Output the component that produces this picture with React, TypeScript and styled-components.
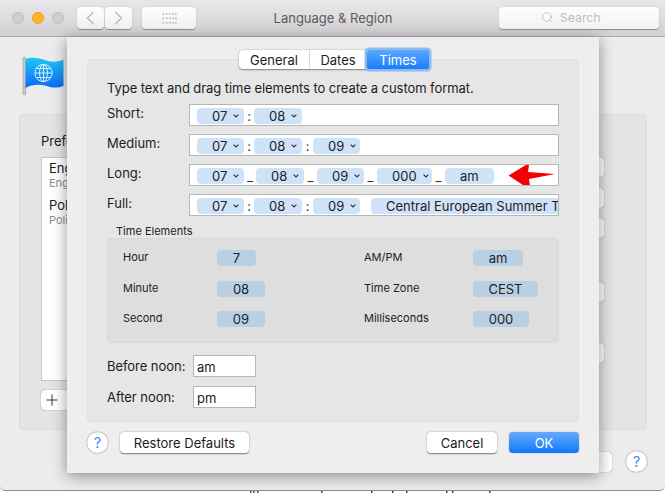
import React from "react";
import styled, { createGlobalStyle } from "styled-components";
import { Search } from "lucide-react";

const GlobalStyle = createGlobalStyle`
  html, body {
    margin: 0;
    padding: 0;
    background: #ffffff;
    overflow: hidden;
  }
  body {
    font-family: Inter, "Liberation Sans", sans-serif;
    font-size: 13px;
    color: #1c1c1c;
  }
`;

const Page = styled.div`
  width: 665px;
  height: 493px;
  overflow: hidden;
`;

const Window = styled.div`
  position: relative;
  width: 665px;
  height: 491px;
  background: #ececec;
  border-bottom: 1px solid #8d8d8d;
  border-radius: 0 0 5px 5px;
  box-sizing: border-box;
  overflow: hidden;
`;

const TitleBar = styled.div`
  height: 37px;
  box-sizing: border-box;
  display: flex;
  align-items: center;
  padding: 0 6px 1px 12px;
  background: linear-gradient(#e9e7e9, #d2d0d2);
  border-bottom: 1px solid #aeaeae;
`;

const Light = styled.span<{ $color: string; $edge: string }>`
  width: 12px;
  height: 12px;
  border-radius: 50%;
  margin-right: 8px;
  background: ${(p) => p.$color};
  border: 1px solid ${(p) => p.$edge};
  box-sizing: border-box;
`;

const ToolButton = styled.div<{ $w: number; $ml?: number }>`
  width: ${(p) => p.$w}px;
  height: 22px;
  margin-left: ${(p) => p.$ml ?? 0}px;
  display: flex;
  align-items: center;
  justify-content: center;
  box-sizing: border-box;
  border-radius: 4px;
  background: linear-gradient(#fdfdfd, #f1f1f1);
  box-shadow: 0 0.5px 1px rgba(0, 0, 0, 0.35);
`;

const WindowTitle = styled.div`
  width: 274px;
  margin-right: 29px;
  text-align: center;
  color: #5a5a5a;
  font-size: 13px;
`;

const SearchBox = styled.div`
  width: 160px;
  height: 22px;
  box-sizing: border-box;
  padding-left: 42px;
  display: flex;
  align-items: center;
  gap: 6px;
  color: #bdbdbd;
  font-size: 12.2px;
  border-radius: 4px;
  background: linear-gradient(#fdfdfd, #f3f3f3);
  box-shadow: 0 0.5px 1px rgba(0, 0, 0, 0.35);
`;

const Pane = styled.div`
  padding: 19px 18px 0 19px;
`;

const FlagMark = styled.svg`
  display: block;
  width: 44px;
  height: 40px;
  margin: 0 0 18px 3px;
`;

const PrefsGroup = styled.div`
  width: 628px;
  height: 316px;
  box-sizing: border-box;
  padding: 18px 0 0 21px;
  background: #e4e4e4;
  border: 1px solid #dddddd;
  border-radius: 4px;
  position: relative;
`;

const PrefsLabel = styled.div`
  height: 16px;
  margin-bottom: 8px;
`;

const PrefsBody = styled.div`
  display: flex;
  justify-content: space-between;
  padding-right: 42px;
`;

const LangList = styled.div`
  width: 300px;
  height: 224px;
  box-sizing: border-box;
  padding: 0 7px;
  background: #ffffff;
  border: 1px solid #c6c6c6;
`;

const LangName = styled.div`
  line-height: 16px;
  margin-top: 2px;
`;

const LangSub = styled.div`
  font-size: 11px;
  line-height: 14px;
  color: #8f8f8f;
  margin-bottom: 7px;
`;

const SideColumn = styled.div`
  display: flex;
  flex-direction: column;
`;

const SideButton = styled.div<{ $top: number }>`
  width: 84px;
  height: 20px;
  margin-top: ${(p) => p.$top}px;
  background: #ffffff;
  border-radius: 4px;
  box-shadow: 0 0 1px rgba(0, 0, 0, 0.6);
`;

const AddButton = styled.div`
  width: 60px;
  height: 20px;
  margin-top: 9px;
  display: flex;
  align-items: center;
  padding-left: 5px;
  box-sizing: border-box;
  background: #ffffff;
  border-radius: 4px;
  box-shadow: 0 0 1px rgba(0, 0, 0, 0.7);
`;

const PaneFooter = styled.div`
  display: flex;
  justify-content: flex-end;
  align-items: center;
  gap: 14px;
  margin-top: 21px;
`;

const FooterButton = styled.div`
  width: 70px;
  height: 20px;
  background: #ffffff;
  border-radius: 4px;
  box-shadow: 0 0 1px rgba(0, 0, 0, 0.6);
`;

const HelpButton = styled.div`
  width: 21px;
  height: 21px;
  border-radius: 50%;
  display: flex;
  align-items: center;
  justify-content: center;
  color: #2b84f6;
  font-size: 14px;
  background: #ffffff;
  box-shadow: 0 0 1.5px rgba(0, 0, 0, 0.6);
`;

const Sheet = styled.div`
  position: absolute;
  left: 67px;
  top: 37px;
  width: 532px;
  height: 436px;
  box-sizing: border-box;
  padding: 13px 20px 0;
  background: #eeeeee;
  box-shadow: 0 3px 14px rgba(0, 0, 0, 0.42);
`;

const Tabs = styled.div`
  position: relative;
  z-index: 1;
  display: flex;
  width: fit-content;
  height: 19px;
  margin: 0 0 -10px 152px;
  border-radius: 4px;
  background: #ffffff;
  box-shadow: 0 0.5px 1.5px rgba(0, 0, 0, 0.45);
`;

const Tab = styled.div<{ $w: number; $active?: boolean }>`
  width: ${(p) => p.$w}px;
  display: flex;
  align-items: center;
  justify-content: center;
  font-size: 13px;
  box-sizing: border-box;
  color: ${(p) => (p.$active ? "#ffffff" : "#1c1c1c")};
  border-right: ${(p) => (p.$active ? "none" : "1px solid #d8d8d8")};
  border-radius: ${(p) => (p.$active ? "2px" : "0")};
  background: ${(p) => (p.$active ? "linear-gradient(#5aa8fd, #1a7dfb)" : "transparent")};
  box-shadow: ${(p) => (p.$active ? "0 0 0 2.5px #8fbcf0" : "none")};
`;

const InnerGroup = styled.div`
  height: 363px;
  box-sizing: border-box;
  padding: 20px 19px 0;
  background: #e6e6e6;
  border: 1px solid #e0e0e0;
  border-radius: 4px;
`;

const Hint = styled.div`
  line-height: 16px;
  margin-bottom: 8px;
  letter-spacing: -0.07px;
`;

const FormatRows = styled.div`
  display: flex;
  flex-direction: column;
  gap: 8px;
`;

const FormatRow = styled.div`
  display: flex;
  height: 22px;
`;

const RowLabel = styled.div`
  width: 82px;
  line-height: 18px;
`;

const FormatField = styled.div`
  position: relative;
  flex: 1;
  display: flex;
  align-items: center;
  box-sizing: border-box;
  padding: 2px 0 0 7px;
  overflow: hidden;
  white-space: nowrap;
  background: #ffffff;
  border: 1px solid #b6b6b6;
`;

const Token = styled.div<{ $w: number; $pad?: number }>`
  flex: none;
  width: ${(p) => p.$w}px;
  height: 16px;
  display: flex;
  align-items: center;
  box-sizing: border-box;
  padding-left: ${(p) => p.$pad ?? 15}px;
  border-radius: 4px;
  background: #cfe3f8;
  color: #222222;
  font-size: 13px;
`;

const Caret = styled.svg`
  width: 6px;
  height: 4px;
  margin-left: 6px;
`;

const Sep = styled.div<{ $w: number }>`
  flex: none;
  width: ${(p) => p.$w}px;
  text-align: center;
  font-size: 13px;
  color: #333333;
`;

const Arrow = styled.svg`
  position: absolute;
  right: 0;
  top: -1px;
  width: 50px;
  height: 24px;
`;

const SectionLabel = styled.div`
  font-size: 11px;
  line-height: 14px;
  color: #222222;
  margin: 8px 0 0 9px;
`;

const ElementsBox = styled.div`
  width: 452px;
  height: 105px;
  box-sizing: border-box;
  padding: 11px 0 0 15px;
  display: grid;
  grid-template-columns: 94px 147px 109px 1fr;
  grid-template-rows: 31px 30px 16px;
  background: #dedede;
  border: 1px solid #d8d8d8;
  border-radius: 4px;
`;

const ElementLabel = styled.div`
  font-size: 11px;
  line-height: 14px;
  color: #222222;
`;

const ElementPill = styled.div<{ $w: number }>`
  width: ${(p) => p.$w}px;
  height: 16px;
  display: flex;
  align-items: center;
  justify-content: center;
  border-radius: 4px;
  background: #b9cfe4;
  color: #222222;
  font-size: 13px;
`;

const NoonRows = styled.div`
  display: flex;
  flex-direction: column;
  gap: 9px;
  margin-top: 12px;
`;

const NoonRow = styled.div`
  display: flex;
  height: 22px;
`;

const NoonLabel = styled.div`
  width: 86px;
  line-height: 22px;
  letter-spacing: -0.05px;
`;

const NoonField = styled.div`
  width: 63px;
  box-sizing: border-box;
  padding-left: 3px;
  line-height: 22px;
  background: #ffffff;
  border: 1px solid #b6b6b6;
`;

const SheetFooter = styled.div`
  display: flex;
  align-items: center;
  margin-top: 10px;
`;

const PushButton = styled.div<{ $w: number; $ml?: number; $primary?: boolean }>`
  width: ${(p) => p.$w}px;
  height: 21px;
  margin-left: ${(p) => p.$ml ?? 0}px;
  display: flex;
  align-items: center;
  justify-content: center;
  font-size: 13px;
  border-radius: 4px;
  color: ${(p) => (p.$primary ? "#ffffff" : "#1c1c1c")};
  background: ${(p) => (p.$primary ? "linear-gradient(#67abfa, #1077fa)" : "#ffffff")};
  box-shadow: ${(p) => (p.$primary ? "0 0 1px rgba(0,60,200,.6)" : "0 0.5px 1.5px rgba(0, 0, 0, 0.5)")};
`;

const Ticks = styled.svg`
  display: block;
  width: 665px;
  height: 2px;
`;

const Chevron = ({ dir }: { dir: "left" | "right" }) => (
  <svg width="11" height="16" viewBox="0 0 11 16" fill="none" stroke="#b9b9b9" strokeWidth="1.4">
    <path d={dir === "left" ? "M8.5 2 L2.5 8 L8.5 14" : "M2.5 2 L8.5 8 L2.5 14"} />
  </svg>
);

const GridDots = () => (
  <svg width="15" height="12" viewBox="0 0 15 12" fill="#b5b5b5">
    {[1, 5.5, 10].map((y) =>
      [0.5, 3.8, 7.1, 10.4, 13].map((x) => <rect key={`${x}-${y}`} x={x} y={y} width="1.6" height="1.6" />)
    )}
  </svg>
);

const Flag = () => (
  <FlagMark viewBox="0 0 44 40">
    <defs>
      <linearGradient id="flagFill" x1="0" y1="0" x2="0" y2="1">
        <stop offset="0" stopColor="#22c6f8" />
        <stop offset="1" stopColor="#0a69f4" />
      </linearGradient>
    </defs>
    <rect x="1" y="1" width="2.6" height="38" rx="1" fill="#c9c9c9" stroke="#8f8f8f" strokeWidth="0.5" />
    <path d="M3.5 3 C12 0.5 18 2.5 26 5 C32 6.5 37 5.5 41.5 3.5 L41.5 30 C36 32 31 32 25 30 C18 28 10 28 3.5 32 Z" fill="url(#flagFill)" />
    <g fill="none" stroke="#ffffff" strokeWidth="0.9" opacity="0.9">
      <circle cx="21.5" cy="17" r="8.6" />
      <ellipse cx="21.5" cy="17" rx="4" ry="8.6" />
      <path d="M21.5 8.4 V25.6 M13 17 H30 M14.2 12.5 H28.8 M14.2 21.5 H28.8" />
    </g>
  </FlagMark>
);

const TokenCaret = () => (
  <Caret viewBox="0 0 6 4" fill="none" stroke="#333333" strokeWidth="1.1">
    <path d="M0.6 0.6 L3 3 L5.4 0.6" />
  </Caret>
);

type Part = { text: string; w: number; caret?: boolean; pad?: number; sep?: number; mark?: string };

const SHORT: Part[] = [
  { text: "07", w: 47, caret: true, sep: 10, mark: ":" },
  { text: "08", w: 48, caret: true },
];
const MEDIUM: Part[] = [
  { text: "07", w: 47, caret: true, sep: 10, mark: ":" },
  { text: "08", w: 48, caret: true, sep: 11, mark: ":" },
  { text: "09", w: 47, caret: true },
];
const LONG: Part[] = [
  { text: "07", w: 47, caret: true, sep: 12, mark: "_" },
  { text: "08", w: 48, caret: true, sep: 13, mark: "_" },
  { text: "09", w: 47, caret: true, sep: 13, mark: "_" },
  { text: "000", w: 55, caret: true, sep: 13, mark: "_" },
  { text: "am", w: 49 },
];
const FULL: Part[] = [
  { text: "07", w: 47, caret: true, sep: 10, mark: ":" },
  { text: "08", w: 48, caret: true, sep: 11, mark: ":" },
  { text: "09", w: 47, caret: true, sep: 11, mark: "" },
  { text: "Central European Summer Time", w: 230 },
];

const Format = ({ label, parts, children }: { label: string; parts: Part[]; children?: React.ReactNode }) => (
  <FormatRow>
    <RowLabel>{label}</RowLabel>
    <FormatField>
      {parts.map((part) => (
        <React.Fragment key={part.text}>
          <Token $w={part.w} $pad={part.pad}>
            {part.text}
            {part.caret && <TokenCaret />}
          </Token>
          {part.sep && <Sep $w={part.sep}>{part.mark}</Sep>}
        </React.Fragment>
      ))}
      {children}
    </FormatField>
  </FormatRow>
);

export default function App() {
  return (
    <Page>
      <GlobalStyle />
      <Window>
        <TitleBar>
          <Light $color="#cfcfcf" $edge="#bdbdbd" />
          <Light $color="#fdb62c" $edge="#eaa21e" />
          <Light $color="#cfcfcf" $edge="#bdbdbd" />
          <ToolButton $w={27} $ml={5}>
            <Chevron dir="left" />
          </ToolButton>
          <ToolButton $w={27} $ml={1}>
            <Chevron dir="right" />
          </ToolButton>
          <ToolButton $w={54} $ml={10}>
            <GridDots />
          </ToolButton>
          <WindowTitle>Language &amp; Region</WindowTitle>
          <SearchBox>
            <Search size={13} strokeWidth={1.4} color="#b5b5b5" />
            Search
          </SearchBox>
        </TitleBar>

        <Pane>
          <Flag />
          <PrefsGroup>
            <PrefsLabel>Preferred languages:</PrefsLabel>
            <PrefsBody>
              <div>
                <LangList>
                  <LangName>English</LangName>
                  <LangSub>English</LangSub>
                  <LangName>Polish</LangName>
                  <LangSub>Polish</LangSub>
                </LangList>
                <AddButton>
                  <svg width="12" height="12" viewBox="0 0 12 12" stroke="#333333" strokeWidth="1">
                    <path d="M6 0.5 V11.5 M0.5 6 H11.5" />
                  </svg>
                </AddButton>
              </div>
              <SideColumn>
                <SideButton $top={0} />
                <SideButton $top={11} />
                <SideButton $top={10} />
                <SideButton $top={44} />
                <SideButton $top={41} />
              </SideColumn>
            </PrefsBody>
          </PrefsGroup>
          <PaneFooter>
            <FooterButton />
            <HelpButton>?</HelpButton>
          </PaneFooter>
        </Pane>

        <Sheet>
          <Tabs>
            <Tab $w={71}>General</Tab>
            <Tab $w={57}>Dates</Tab>
            <Tab $w={62} $active>
              Times
            </Tab>
          </Tabs>
          <InnerGroup>
            <Hint>Type text and drag time elements to create a custom format.</Hint>
            <FormatRows>
              <Format label="Short:" parts={SHORT} />
              <Format label="Medium:" parts={MEDIUM} />
              <Format label="Long:" parts={LONG}>
                <Arrow viewBox="0 0 50 24">
                  <path d="M0.5 11.5 L19.5 0 L21 1.5 L20 8 L47 10 L21 15 L22 21.5 L18 23 Z" fill="#f40000" />
                </Arrow>
              </Format>
              <Format label="Full:" parts={FULL} />
            </FormatRows>
            <SectionLabel>Time Elements</SectionLabel>
            <ElementsBox>
              <ElementLabel>Hour</ElementLabel>
              <ElementPill $w={39}>7</ElementPill>
              <ElementLabel>AM/PM</ElementLabel>
              <ElementPill $w={50}>am</ElementPill>
              <ElementLabel>Minute</ElementLabel>
              <ElementPill $w={48}>08</ElementPill>
              <ElementLabel>Time Zone</ElementLabel>
              <ElementPill $w={65}>CEST</ElementPill>
              <ElementLabel>Second</ElementLabel>
              <ElementPill $w={48}>09</ElementPill>
              <ElementLabel>Milliseconds</ElementLabel>
              <ElementPill $w={56}>000</ElementPill>
            </ElementsBox>
            <NoonRows>
              <NoonRow>
                <NoonLabel>Before noon:</NoonLabel>
                <NoonField>am</NoonField>
              </NoonRow>
              <NoonRow>
                <NoonLabel>After noon:</NoonLabel>
                <NoonField>pm</NoonField>
              </NoonRow>
            </NoonRows>
          </InnerGroup>
          <SheetFooter>
            <HelpButton>?</HelpButton>
            <PushButton $w={129} $ml={12}>
              Restore Defaults
            </PushButton>
            <PushButton $w={70} $ml={178}>
              Cancel
            </PushButton>
            <PushButton $w={70} $ml={12} $primary>
              OK
            </PushButton>
          </SheetFooter>
        </Sheet>
      </Window>
      <Ticks viewBox="0 0 665 2" fill="#444444">
        {[250, 253, 257, 321, 371, 392, 406, 446, 452, 489].map((x) => (
          <rect key={x} x={x} y="0" width="1.5" height="2" />
        ))}
      </Ticks>
    </Page>
  );
}
